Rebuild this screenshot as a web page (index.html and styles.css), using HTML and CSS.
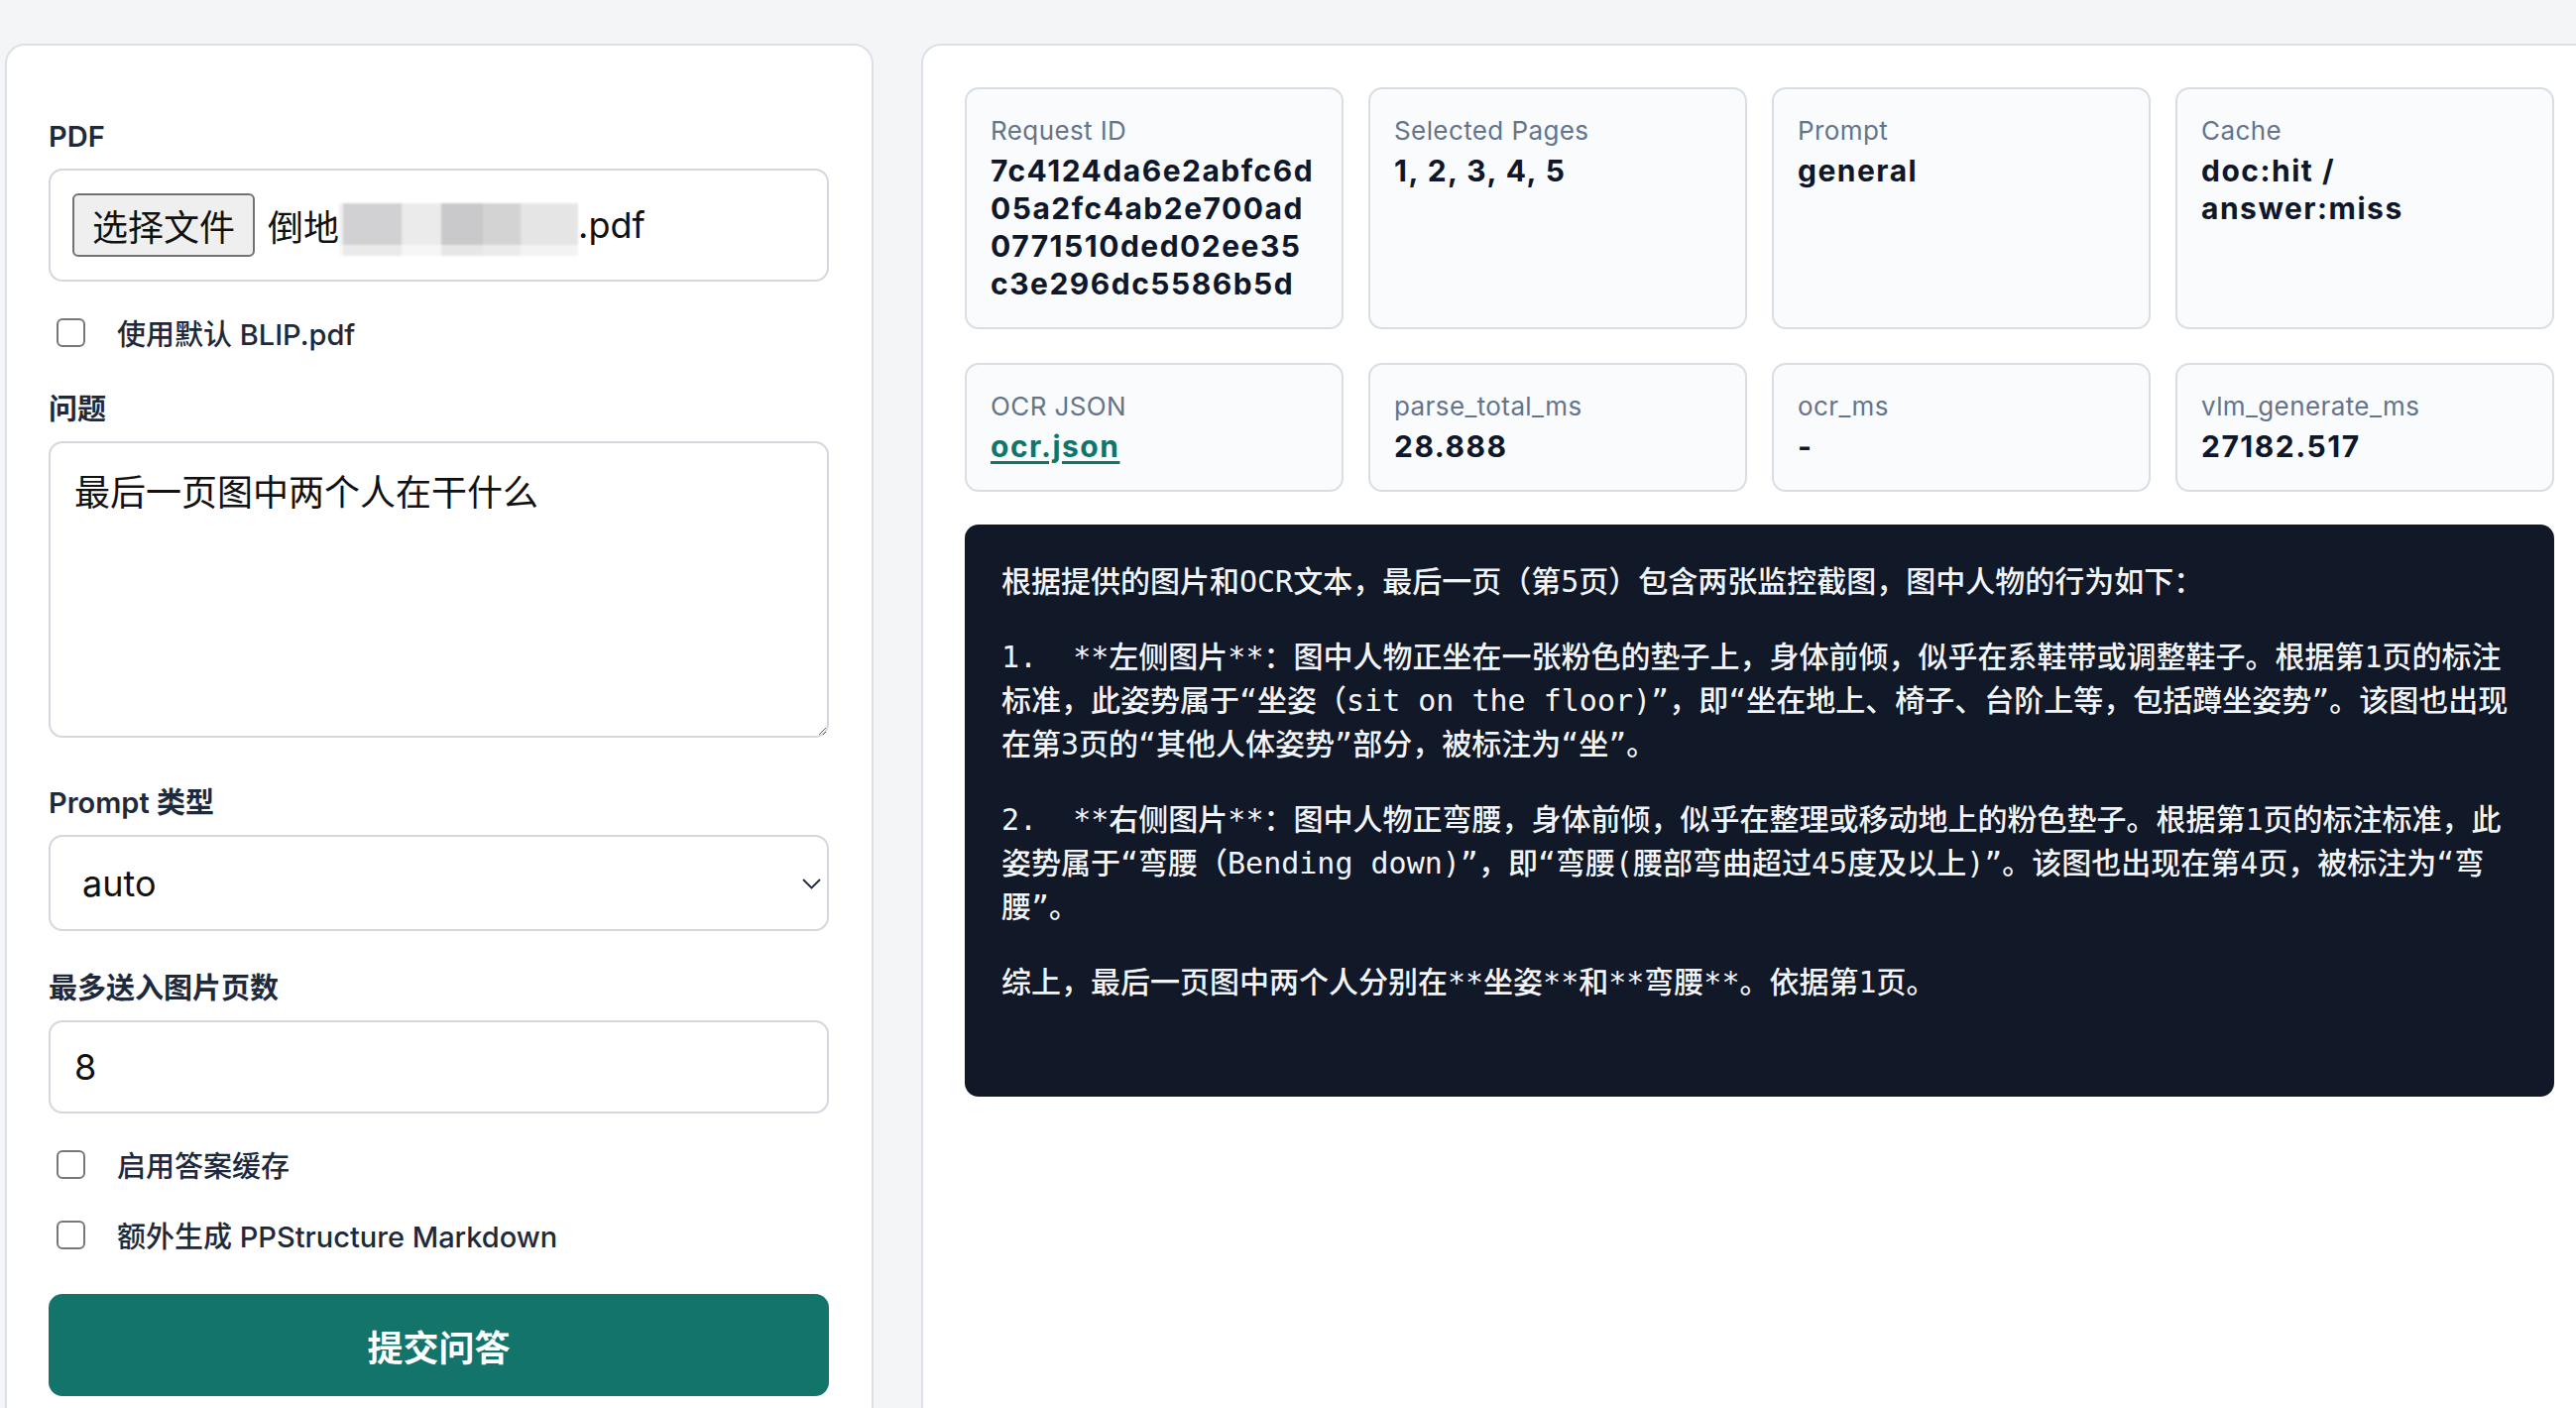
FILE: index.html
```html
<!DOCTYPE html>
<html lang="zh-CN">
<head>
    <meta charset="UTF-8">
    <meta name="viewport" content="width=device-width, initial-scale=1.0">
    <title>PDF 问答</title>
    <link rel="stylesheet" href="styles.css">
</head>
<body>
    <main class="page">
        <form class="panel ask-form">
            <div class="field first">
                <label class="field-label">PDF</label>
                <div class="file-box">
                    <span class="file-btn">选择文件</span>
                    <span class="file-name">倒地<span class="file-mask"></span>.pdf</span>
                </div>
            </div>

            <label class="check"><input type="checkbox"><span>使用默认 BLIP.pdf</span></label>

            <div class="field">
                <label class="field-label" for="question">问题</label>
                <textarea id="question" class="control question">最后一页图中两个人在干什么</textarea>
            </div>

            <div class="field">
                <label class="field-label" for="prompt">Prompt 类型</label>
                <div class="select-wrap">
                    <select id="prompt" class="control select">
                        <option>auto</option>
                        <option>general</option>
                    </select>
                    <svg class="chevron" width="19" height="11" viewBox="0 0 19 11"><path d="M1 1l8.5 8.5L18 1" fill="none" stroke="#1f2937" stroke-width="1.8"/></svg>
                </div>
            </div>

            <div class="field">
                <label class="field-label" for="max-pages">最多送入图片页数</label>
                <input id="max-pages" class="control number" type="text" value="8">
            </div>

            <label class="check"><input type="checkbox"><span>启用答案缓存</span></label>
            <label class="check"><input type="checkbox"><span>额外生成 PPStructure Markdown</span></label>

            <button type="button" class="submit">提交问答</button>
        </form>

        <section class="panel result">
            <div class="stats">
                <div class="stat">
                    <div class="stat-label">Request ID</div>
                    <div class="stat-value">7c4124da6e2abfc6d<wbr>05a2fc4ab2e700ad<wbr>0771510ded02ee35<wbr>c3e296dc5586b5d</div>
                </div>
                <div class="stat">
                    <div class="stat-label">Selected Pages</div>
                    <div class="stat-value">1, 2, 3, 4, 5</div>
                </div>
                <div class="stat">
                    <div class="stat-label">Prompt</div>
                    <div class="stat-value">general</div>
                </div>
                <div class="stat">
                    <div class="stat-label">Cache</div>
                    <div class="stat-value">doc:hit / answer:miss</div>
                </div>
                <div class="stat">
                    <div class="stat-label">OCR JSON</div>
                    <div class="stat-value"><a href="#">ocr.json</a></div>
                </div>
                <div class="stat">
                    <div class="stat-label">parse_total_ms</div>
                    <div class="stat-value">28.888</div>
                </div>
                <div class="stat">
                    <div class="stat-label">ocr_ms</div>
                    <div class="stat-value">-</div>
                </div>
                <div class="stat">
                    <div class="stat-label">vlm_generate_ms</div>
                    <div class="stat-value">27182.517</div>
                </div>
            </div>

            <div class="answer">
                <p>根据提供的图片和OCR文本，最后一页（第5页）包含两张监控截图，图中人物的行为如下：</p>
                <p>1.  **左侧图片**：图中人物正坐在一张粉色的垫子上，身体前倾，似乎在系鞋带或调整鞋子。根据第1页的标注标准，此姿势属于“坐姿（sit on the floor)”，即“坐在地上、椅子、台阶上等，包括蹲坐姿势”。该图也出现在第3页的“其他人体姿势”部分，被标注为“坐”。</p>
                <p>2.  **右侧图片**：图中人物正弯腰，身体前倾，似乎在整理或移动地上的粉色垫子。根据第1页的标注标准，此姿势属于“弯腰（Bending down)”，即“弯腰(腰部弯曲超过45度及以上)”。该图也出现在第4页，被标注为“弯腰”。</p>
                <p>综上，最后一页图中两个人分别在**坐姿**和**弯腰**。依据第1页。</p>
            </div>
        </section>
    </main>
</body>
</html>
```

FILE: styles.css
```css
html, body {
    margin: 0;
    padding: 0;
    background: #f4f5f7;
    overflow: hidden;
    font-family: Inter, "Noto Sans CJK SC", sans-serif;
    color: #1e293b;
}

.page {
    display: flex;
    align-items: flex-start;
    gap: 48px;
    width: max-content;
    padding: 44px 0 0 5px;
}

.panel {
    box-sizing: border-box;
    background: #fff;
    border: 2px solid #dde1e7;
    border-radius: 20px;
}

/* left column: the question form */
.ask-form {
    width: 876px;
    padding: 72px 43px 60px 42px;
    display: flex;
    flex-direction: column;
}

.field {
    display: flex;
    flex-direction: column;
    margin-top: 38px;
}

.field.first {
    margin-top: 0;
}

.field-label {
    font-size: 29px;
    line-height: 40px;
    font-weight: 600;
    color: #1e293b;
    margin-bottom: 12px;
}

.control,
.file-box {
    box-sizing: border-box;
    width: 100%;
    border: 2px solid #d3d8df;
    border-radius: 14px;
    background: #fff;
    font-family: Inter, "Noto Sans CJK SC", sans-serif;
    font-size: 36px;
    color: #111;
    margin: 0;
}

.file-box {
    height: 114px;
    display: flex;
    align-items: center;
    padding: 0 22px;
}

.file-btn {
    box-sizing: border-box;
    height: 64px;
    display: inline-flex;
    align-items: center;
    padding: 0 18px;
    background: #efefef;
    border: 2px solid #727272;
    border-radius: 6px;
    color: #111;
}

.file-name {
    display: inline-flex;
    align-items: center;
    margin-left: 13px;
    color: #111;
}

/* blurred part of the file name */
.file-mask {
    display: inline-block;
    width: 241px;
    height: 53px;
    margin-top: 8px;
    background:
        linear-gradient(180deg, rgba(255,255,255,0) 0 80%, rgba(255,255,255,0.55) 80% 100%),
        linear-gradient(90deg, #f0f0f0 0 4px, #d1d1d3 4px 63px, #ebebeb 63px 103px, #c9c9cb 103px 145px, #d3d3d4 145px 183px, #e5e5e6 183px 100%);
    filter: blur(1px);
}

.check {
    display: flex;
    align-items: center;
    gap: 32px;
    height: 40px;
    margin-top: 31px;
    font-size: 29px;
    font-weight: 500;
    color: #1e293b;
}

.check input {
    appearance: none;
    box-sizing: border-box;
    width: 29px;
    height: 29px;
    margin: 0 0 0 8px;
    border: 2px solid #777;
    border-radius: 6px;
    background: #fff;
}

.question {
    display: block;
    height: 299px;
    padding: 27px 24px 20px;
    line-height: 1.3;
    resize: vertical;
    margin-bottom: 8px;
}

.select-wrap {
    position: relative;
}

.select {
    appearance: none;
    height: 97px;
    padding: 0 40px 0 32px;
}

.chevron {
    position: absolute;
    right: 8px;
    top: 44px;
}

.number {
    height: 94px;
    padding: 0 24px;
    outline: none;
}

.submit {
    margin-top: 40px;
    height: 103px;
    border: none;
    border-radius: 14px;
    background: #13746b;
    color: #fff;
    font-family: Inter, "Noto Sans CJK SC", sans-serif;
    font-size: 36px;
    font-weight: 700;
}

/* right column: stats and answer */
.result {
    width: 1691px;
    min-height: 1420px;
    padding: 42px;
}

.stats {
    display: grid;
    grid-template-columns: repeat(4, 1fr);
    column-gap: 25px;
    row-gap: 34px;
}

.stat {
    padding: 25px 24px;
    border: 2px solid #d9dde4;
    border-radius: 14px;
    background: #fafbfc;
}

.stat-label {
    font-size: 26px;
    line-height: 34px;
    letter-spacing: 0.4px;
    color: #64748b;
}

.stat-value {
    margin-top: 4px;
    font-size: 30px;
    line-height: 38px;
    font-weight: 700;
    letter-spacing: 1.5px;
    color: #0f172a;
}

.stat-value a {
    color: #0f766e;
    text-decoration: underline;
    text-underline-offset: 4px;
}

.answer {
    margin-top: 33px;
    padding: 36px 36px 93px 37px;
    background: #111827;
    border-radius: 14px;
    color: #f1f5f9;
    font-family: "DejaVu Sans Mono", "Noto Sans CJK SC Medium", "Noto Sans CJK SC", monospace;
    font-size: 30px;
    line-height: 44px;
    font-weight: 500;
}

.answer p {
    margin: 0 0 32px;
    white-space: pre-wrap;
}

.answer p:last-child {
    margin-bottom: 0;
}
```
